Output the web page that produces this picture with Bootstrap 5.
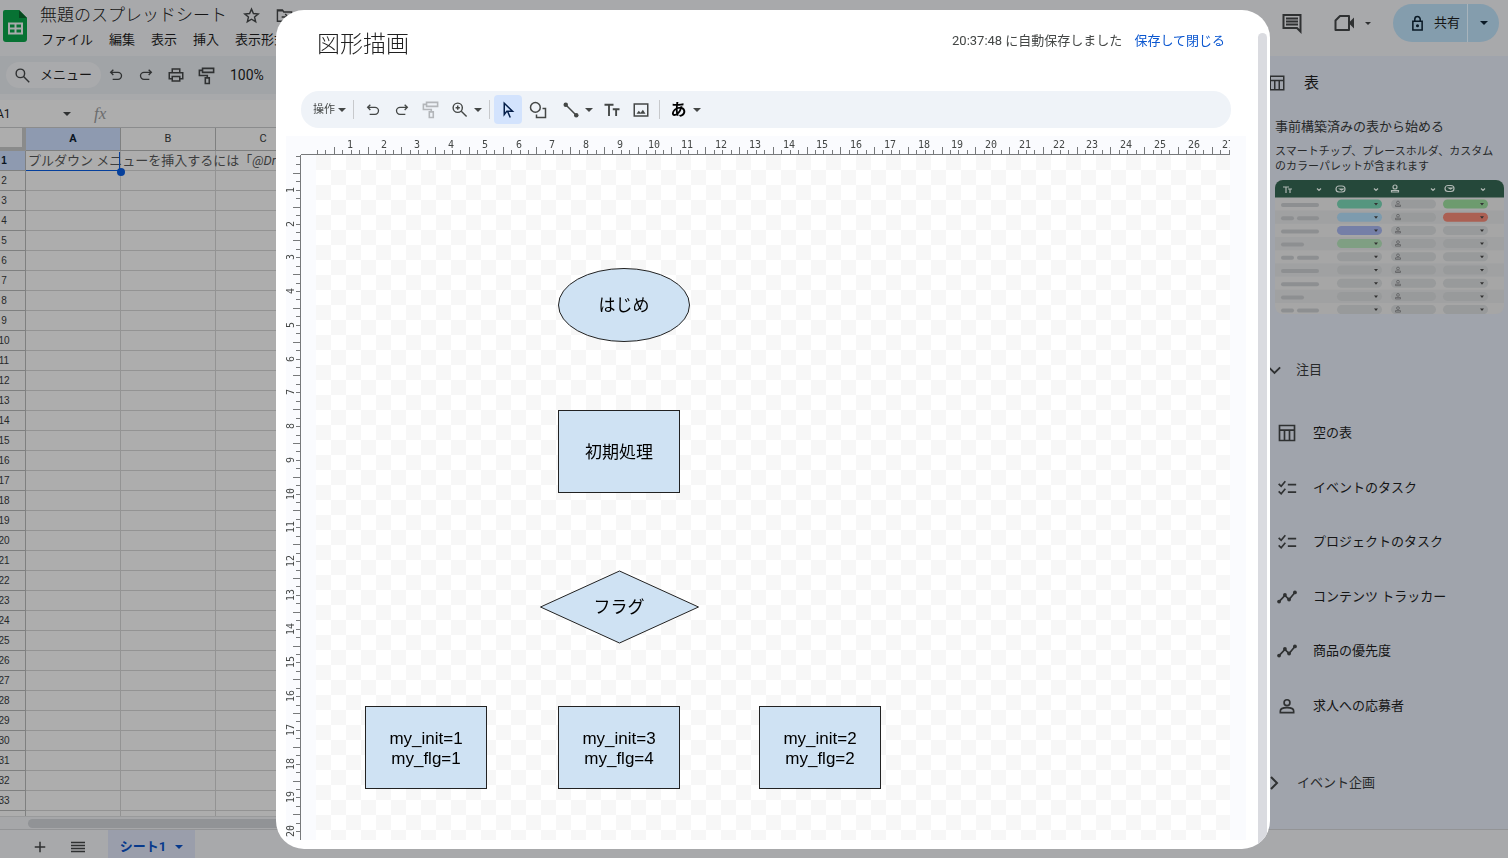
<!DOCTYPE html>
<html lang="ja">
<head>
<meta charset="utf-8">
<meta name="viewport" content="width=device-width, initial-scale=1">
<title>無題のスプレッドシート</title>
<link href="https://cdn.jsdelivr.net/npm/bootstrap@5.3.0/dist/css/bootstrap.min.css" rel="stylesheet">
<style>
:root{--page:#a8a9ab;--sheet:#adadad;--panel:#a0a4ac;--ink:#151515;--icon:#2f3132;--blue:#06409c}
body{font-family:Roboto,"Noto Sans CJK JP",sans-serif;font-size:13px;line-height:20px;color:var(--ink);background:var(--page)}
a,a:hover{color:inherit;text-decoration:none}
button{font:inherit;color:inherit;background:none;border:0;padding:0;display:inline-flex;align-items:center;justify-content:center}
svg{display:block;flex:none}
.ico{fill:none;stroke:currentColor;stroke-width:2}
.app .ico,.app .tri{color:var(--icon)}
.app .share .ico,.app .share .tri{color:#0a1a26}
.tri{width:0;height:0;border:4px solid transparent;border-top-color:currentColor;border-bottom:0;flex:none}
.tri-s{border-width:3px;border-bottom:0}
.app{height:100vh}
.topbar{flex:none;height:56px;padding:0 9px 0 2px}
.doc-title{padding-top:2px}
.doc-name{font-size:17px;line-height:26px;font-weight:300}
.doc-menus{margin-top:2px;margin-left:1px}
.sheet-side{margin-left:-20px;min-width:0}
.toolbar-main{flex:none;height:38px;background:#a1a4a7;border-radius:19px;margin-bottom:6px;padding-left:26px}
.find-pill{width:95px;height:26px;border-radius:13px;background:#a9aaac;gap:9px;padding-left:8px}
.tool{width:30px;height:30px}
.zoom-level{font-size:14px;margin-left:9px}
.call-group{gap:9px;margin:0 22px 0 28px}
.share{height:38px;background:#849dad;border-radius:19px;width:106px}
.share-main{width:75px;border-right:1px solid #a8b4bc;gap:9px;padding-left:10px}
.formula{flex:none;height:28px;background:var(--sheet);border-bottom:1px solid #8b8c8d}
.name-box{width:67px;margin-left:16px;border:0;background:none;padding:0;font-size:12px;color:var(--ink)}
.fx{font-family:"Liberation Serif",serif;font-style:italic;font-size:17px;color:#6b6c6e;margin-left:23px}
.grid-wrap{background:var(--sheet)}
.cells{table-layout:fixed;width:331px;border-collapse:separate;border-spacing:0;font-size:10px;line-height:19px}
.cells th,.cells td{height:20px;padding:0;border:0 solid #939393;border-width:0 1px 1px 0;white-space:nowrap}
.cells th{text-align:center;font-weight:400;color:#27292a;border-color:#7f8080}
.cells tbody th{padding-left:3px;font-family:"Liberation Sans",sans-serif}
.cells thead th{height:23px;font-size:11px;line-height:22px}
.cells thead th:first-child{border-right:4px solid #8a8b8b;border-bottom:4px solid #8a8b8b}
.cells th.on{background:#8e9ab0;color:#0a1522;font-weight:700}
.cells td.active{position:relative;border-bottom-color:var(--blue);font-size:13px;padding-left:2px;color:#3c3d3e}
.cells td.active::before{content:"";position:absolute;right:0;top:1px;width:1px;height:19px;background:var(--blue)}
.cells td.active::after{content:"";position:absolute;right:-5px;bottom:-6px;width:8px;height:8px;border-radius:4px;background:var(--blue)}
.scroll-row{flex:none;height:13px;padding:2px 0 2px 48px;border-top:1px solid #999a9b;background:#a6a7a9}
.scroll-thumb{background:#919396;border-radius:5px;height:9px}
.footer-tabs{flex:none;height:29px;border-top:1px solid #939496;padding-left:31px}
.footer-tabs button{padding-top:6px}
.all-sheets{margin:0 23px 0 22px}
.app .sheet-tab,.app .sheet-tab .tri{color:#07398b}
.sheet-tab{background:#9a9eab;width:87px;gap:9px;font-weight:700}
.side-panel{width:248px;background:var(--panel);padding-left:15px}
.panel-head{height:53px;margin-left:-7px;gap:18px;font-size:15px}
.panel-note{font-size:11px;line-height:15px;margin:7px 8px 6px 0}
.preview{width:229px}
.section-row{height:40px;color:#27292a;margin-left:-8px;gap:14px}
.first-section{margin-top:36px}
.next-section{margin-top:30px}
.template-list{height:327px}
.template-list a{gap:16px;padding-left:2px}
.dialog-box{position:fixed;inset:10px 238px 9px 276px;background:#fff;border-radius:28px;overflow:hidden;color:#444746}
.dialog-head{height:81px;padding:21px 45px 0 41px}
.dialog-head h1{font-size:23px;line-height:28px;margin:0;color:#1f1f1f;font-weight:300}
.save-link,.save-link:hover{color:#0b57d0}
.draw-tools{height:37px;margin:0 39px 8px 25px;border-radius:18px;background:#eff3f8;padding-left:12px}
.draw-tools .tool{height:29px;width:29px}
.draw-tools .tool.on{width:28px;margin:0 1px 0 4px;border-radius:4px;background:#d3e3fd;color:#041e49}
.ops{font-size:11px;gap:3px;margin-right:7px}
.zoom-menu{margin-right:7px}
.bar{width:1px;height:19px;background:#c7c9cc}
.stage{margin:0 24px 9px 10px;background:#fafbfe;display:grid;grid-template:19px minmax(0,1fr)/15px minmax(0,1fr) 16px}
.stage svg{width:100%;height:100%;overflow:hidden}
.stage text{text-anchor:middle}
.rule-x{grid-column:2;border-bottom:1px solid #77797b}
.rule-y{grid-column:1;grid-row:2;border-right:1px solid #77797b}
.rule-x text,.rule-y text{font:10px "DejaVu Sans Mono",monospace;fill:#444746}
.rule-x path,.rule-y path{stroke:#77797b;fill:none;shape-rendering:crispEdges}
.paper{grid-column:2;grid-row:2;margin-left:15px;background:repeating-conic-gradient(#fff 0 25%,#f7f7f7 0 50%) 0 0/30px 30px}
.paper text{font-family:"Liberation Sans","Noto Sans CJK JP",sans-serif;font-size:17px;fill:#000}
.node{fill:#cfe2f3;stroke:#222;stroke-width:1}
.dialog-scroll{position:absolute;right:3px;top:23px;bottom:0;width:9px;background:#dadbe0;border-radius:5px 5px 0 0}
</style>
</head>
<body>
<svg width="0" height="0" class="position-absolute" aria-hidden="true">
<symbol id="undo" viewBox="0 0 24 24"><path d="M8 4 4 8l4 4M4 8h11a5 5 0 0 1 0 10.500H7"/></symbol>
<symbol id="redo" viewBox="0 0 24 24"><path d="m16 4 4 4-4 4M20 8H9a5 5 0 0 0 0 10.500h8"/></symbol>
<symbol id="roller" viewBox="0 0 24 24"><path d="M7 3h14v5H7zM7 5.500H3V12h10v3M10.500 15h5v7h-5z"/></symbol>
<symbol id="grid-ico" viewBox="0 0 24 24"><path d="M3 3h18v18H3zM3 8.500h18M9 8.500V21M15 8.500V21"/></symbol>
<symbol id="checks" viewBox="0 0 24 24"><path d="m2 7 3 3 5-6M2 16l3 3 5-6M13 8h10M13 17h10"/></symbol>
<symbol id="trend" viewBox="0 0 24 24"><path d="m2.500 17.500 7-7.500 5 5 7-8.500"/><g fill="currentColor" stroke="none"><circle cx="2.500" cy="17.500" r="2.300"/><circle cx="9.500" cy="9.500" r="2.300"/><circle cx="14.500" cy="15" r="2.300"/><circle cx="21.500" cy="6.500" r="2.300"/></g></symbol>
<symbol id="person" viewBox="0 0 24 24"><circle cx="12" cy="8" r="3.500"/><path d="M4 20v-2c0-3 5-4 8-4s8 1 8 4v2z"/></symbol>
</svg>

<div class="app d-flex flex-column overflow-hidden">
<header class="topbar d-flex align-items-start">
  <svg width="26" height="34" viewBox="0 0 26 34" class="mt-2" aria-hidden="true"><path d="M3 2h14l8 8v21a3 3 0 0 1-3 3H4a3 3 0 0 1-3-3V4a2 2 0 0 1 2-2z" fill="#077233"/><path d="m17 2 8 8h-8z" fill="#06491f"/><path d="M7 15.500h13v10H7zM7 20.500h13M13.500 15v10" fill="none" stroke="#a9abac" stroke-width="2"/></svg>
  <div class="doc-title ms-2 ps-1">
    <div class="d-flex align-items-center"><span class="doc-name">無題のスプレッドシート</span>
      <button class="ms-3" aria-label="スター"><svg class="ico" width="17" height="17" viewBox="0 0 24 24"><path d="m12 3 2.700 6.200 6.800.6-5.200 4.400 1.600 6.600-5.900-3.500-5.900 3.500 1.600-6.600L2.500 9.800l6.800-.6z"/></svg></button>
      <button class="ms-3" aria-label="移動"><svg class="ico" width="17" height="17" viewBox="0 0 24 24"><path d="M2 4h7l2 3h11v13H2zM2 5.500h8M8 14h9M13 10l4 4-4 4"/></svg></button></div>
    <nav class="doc-menus d-flex gap-3"><a href="#">ファイル</a><a href="#">編集</a><a href="#">表示</a><a href="#">挿入</a><a href="#">表示形式</a></nav>
  </div>
  <div class="ms-auto d-flex align-items-center pt-1">
    <button aria-label="コメント"><svg class="ico" width="24" height="24" viewBox="0 0 24 24"><path d="M3.500 4h17v16.500L17 17H3.500zM6 7.500h12M6 10.500h12M6 13.500h12"/></svg></button>
    <button class="call-group" aria-label="通話"><svg class="ico" width="24" height="24" viewBox="0 0 24 24"><path d="M8 5h9v14H3.500V9.500z" stroke-linejoin="round"/><path d="m18 12 3-3v6z" fill="currentColor"/></svg><span class="tri tri-s"></span></button>
    <div class="share d-flex"><button class="share-main"><svg class="ico" width="15" height="17" viewBox="0 0 18 22"><path d="M3 8h12v11.500H3zM5.500 8V5.500a3.500 3.500 0 0 1 7 0V8"/><circle cx="9" cy="14" r="1"/></svg>共有</button><button class="flex-fill" aria-label="共有オプション"><span class="tri"></span></button></div>
  </div>
</header>

<div class="d-flex flex-fill overflow-hidden">
<main class="sheet-side flex-fill d-flex flex-column">
  <div class="toolbar-main d-flex align-items-center">
    <button class="find-pill justify-content-start"><svg class="ico" width="17" height="17" viewBox="0 0 24 24"><circle cx="9" cy="9" r="6"/><path d="m13.500 13.500 8 8"/></svg>メニュー</button>
    <button class="tool" aria-label="元に戻す"><svg class="ico" width="16" height="16"><use href="#undo"/></svg></button>
    <button class="tool" aria-label="やり直す"><svg class="ico" width="16" height="16"><use href="#redo"/></svg></button>
    <button class="tool" aria-label="印刷"><svg class="ico" width="18" height="18" viewBox="0 0 24 24"><path d="M7 8V4h10v4M7 17H3V9h18v8h-4M7 14h10v6H7z"/></svg></button>
    <button class="tool" aria-label="書式を貼り付け"><svg class="ico" width="19" height="19"><use href="#roller"/></svg></button>
    <button class="zoom-level">100%</button>
  </div>
  <div class="formula d-flex align-items-center">
    <input class="name-box" value="A1" aria-label="名前ボックス"><span class="tri"></span><span class="fx">fx</span>
  </div>
  <div class="grid-wrap flex-fill overflow-hidden">
    <table class="cells"><colgroup><col style="width:46px"><col style="width:95px"><col style="width:95px"><col style="width:95px"></colgroup>
    <thead><tr><th></th><th class="on">A</th><th>B</th><th>C</th></tr></thead><tbody id="rows"></tbody></table>
  </div>
  <div class="scroll-row"><div class="scroll-thumb"></div></div>
</main>

<aside class="side-panel">
  <div class="panel-head d-flex align-items-center"><svg class="ico" width="18" height="20"><use href="#grid-ico"/></svg><span>表</span></div>
  <div class="mt-2" style="color:#27292a"><span>事前構築済みの表から始める</span>
  <p class="panel-note">スマートチップ、プレースホルダ、カスタムのカラーパレットが含まれます</p></div>
  <svg class="preview" id="preview" height="134" viewBox="0 0 229 134" aria-hidden="true"></svg>
  <div class="section-row first-section d-flex align-items-center"><svg class="ico" width="15" height="15" viewBox="0 0 24 24"><path stroke-width="3" d="m3 7 9 9 9-9"/></svg><a href="#">注目</a></div>
  <div class="template-list d-flex flex-column mt-3">
    <a href="#" class="flex-fill d-flex align-items-center"><svg class="ico" width="20" height="20"><use href="#grid-ico"/></svg>空の表</a>
    <a href="#" class="flex-fill d-flex align-items-center"><svg class="ico" width="20" height="20"><use href="#checks"/></svg>イベントのタスク</a>
    <a href="#" class="flex-fill d-flex align-items-center"><svg class="ico" width="20" height="20"><use href="#checks"/></svg>プロジェクトのタスク</a>
    <a href="#" class="flex-fill d-flex align-items-center"><svg class="ico" width="20" height="20"><use href="#trend"/></svg>コンテンツ トラッカー</a>
    <a href="#" class="flex-fill d-flex align-items-center"><svg class="ico" width="20" height="20"><use href="#trend"/></svg>商品の優先度</a>
    <a href="#" class="flex-fill d-flex align-items-center"><svg class="ico" width="20" height="20"><use href="#person"/></svg>求人への応募者</a>
  </div>
  <div class="section-row next-section d-flex align-items-center"><svg class="ico" width="16" height="16" viewBox="0 0 24 24"><path stroke-width="3" d="m6 3 9 9-9 9"/></svg><a href="#">イベント企画</a></div>
</aside>
</div>

<footer class="footer-tabs d-flex">
  <button aria-label="シートを追加"><svg class="ico" width="18" height="18" viewBox="0 0 24 24"><path d="M12 5v14M5 12h14"/></svg></button>
  <button class="all-sheets" aria-label="すべてのシート"><svg class="ico" width="14" height="14" viewBox="0 0 14 14"><path stroke-width="1.500" d="M0 2.500h14M0 5.500h14M0 8.500h14M0 11.500h14"/></svg></button>
  <button class="sheet-tab">シート1<span class="tri"></span></button>
</footer>
</div>

<section class="dialog-box d-flex flex-column" role="dialog" aria-label="図形描画">
  <div class="dialog-head d-flex justify-content-between align-items-start"><h1>図形描画</h1>
    <div class="d-flex"><span>20:37:48 に自動保存しました</span><a href="#" class="save-link ms-2 ps-1">保存して閉じる</a></div></div>
  <div class="draw-tools d-flex align-items-center">
    <button class="ops">操作<span class="tri"></span></button><span class="bar me-1"></span>
    <button class="tool" aria-label="元に戻す"><svg class="ico" width="16" height="16"><use href="#undo"/></svg></button>
    <button class="tool" aria-label="やり直す"><svg class="ico" width="16" height="16"><use href="#redo"/></svg></button>
    <button class="tool text-black-50 opacity-50" aria-label="書式を貼り付け"><svg class="ico" width="19" height="19"><use href="#roller"/></svg></button>
    <button class="tool" aria-label="ズーム"><svg class="ico" width="17" height="17" viewBox="0 0 24 24"><circle cx="9.500" cy="9.500" r="6.500"/><path d="m14.500 14.500 7.500 7.500M9.500 6.500v6M6.500 9.500h6"/></svg></button>
    <button class="zoom-menu" aria-label="ズーム倍率"><span class="tri"></span></button><span class="bar"></span>
    <button class="tool on" aria-label="選択"><svg class="ico" width="18" height="18" viewBox="0 0 24 24"><path d="M7 3v15l3.500-4.500H18zM11.500 14l3.500 8"/></svg></button>
    <button class="tool" aria-label="図形"><svg class="ico" width="18" height="18" viewBox="0 0 24 24"><circle cx="8.500" cy="8.500" r="6.500"/><path d="M18 10h4v12H10v-4"/></svg></button>
    <button class="tool ms-1" aria-label="線"><svg class="ico" width="18" height="18" viewBox="0 0 24 24"><path d="m4 4 16 16"/><g fill="currentColor" stroke="none"><circle cx="5" cy="5" r="3"/><circle cx="19" cy="19" r="3"/></g></svg></button>
    <button aria-label="線の種類"><span class="tri"></span></button>
    <button class="tool ms-1" aria-label="テキスト"><svg class="ico" width="18" height="18" viewBox="0 0 24 24"><path stroke-width="2.500" d="M2 5h12M8 5v15M13 11h9M17.500 11v9"/></svg></button>
    <button class="tool" aria-label="画像"><svg class="ico" width="18" height="18" viewBox="0 0 24 24"><path d="M3 4h18v16H3z"/><path fill="currentColor" stroke="none" d="m6 17 3-4 2.500 2.500 3-4L18 17z"/></svg></button><span class="bar me-1 ms-1"></span>
    <button class="tool text-black fw-bold fs-6">あ</button><button aria-label="入力方法"><span class="tri"></span></button>
  </div>
  <div class="stage flex-fill">
    <div class="rule-x"><svg id="ruleX" aria-label="水平ルーラー"></svg></div>
    <div class="rule-y"><svg id="ruleY" aria-label="垂直ルーラー"></svg></div>
    <div class="paper"><svg>
      <ellipse class="node" cx="308" cy="150" rx="65.500" ry="36.500"/><text x="308" y="156">はじめ</text>
      <rect class="node" x="242.500" y="255.500" width="121" height="82"/><text x="303" y="303">初期処理</text>
      <path class="node" d="m224.500 452 79-36 79 36-79 36z"/><text x="303" y="458">フラグ</text>
      <rect class="node" x="49.500" y="551.500" width="121" height="82"/><text x="110" y="589">my_init=1</text><text x="110" y="609">my_flg=1</text>
      <rect class="node" x="242.500" y="551.500" width="121" height="82"/><text x="303" y="589">my_init=3</text><text x="303" y="609">my_flg=4</text>
      <rect class="node" x="443.500" y="551.500" width="121" height="82"/><text x="504" y="589">my_init=2</text><text x="504" y="609">my_flg=2</text>
    </svg></div>
  </div>
  <div class="dialog-scroll"></div>
</section>

<script src="https://cdn.jsdelivr.net/npm/bootstrap@5.3.0/dist/js/bootstrap.bundle.min.js"></script>
<script>
// Sheet rows
let rows = '';
for (let n = 1; n <= 33; n++) {
  rows += n === 1
    ? '<tr><th class="on">1</th><td class="active">プルダウン メニューを挿入するには「<i>@Dropdown</i></td><td></td><td></td></tr>'
    : `<tr><th>${n}</th><td></td><td></td><td></td></tr>`;
}
rows += '<tr><th></th><td></td><td></td><td></td></tr>';
document.getElementById('rows').innerHTML = rows;

// Rulers: four ticks per centimetre, the half-centimetre tick is the long one
const cm = 33.76;
let px = '', py = '', tx = '', ty = '';
for (let q = 0; q <= 108; q++) {
  const d = Math.round(q * cm / 4), len = q % 4 === 2 ? 7 : 4;
  px += `M${16.5 + d} 18v-${len}`;
  if (q < 82) py += `M14 ${1.5 + d}h-${len}`;
}
for (let n = 1; n <= 27; n++) {
  const d = Math.round(n * cm);
  tx += `<text x="${15 + d}" y="12">${n}</text>`;
  if (n < 21) ty += `<text transform="translate(8 ${d + 1}) rotate(-90)">${n}</text>`;
}
document.getElementById('ruleX').innerHTML = `<path d="${px}"/>${tx}`;
document.getElementById('ruleY').innerHTML = `<path d="${py}"/>${ty}`;

// Table template preview
const tints = [['#55967f', '#6d9b6e'], ['#7d9bae', '#ab6053'], ['#757fa7', '#989a9b'], ['#7f9f83', '#989a9b']];
let p = '<clipPath id="clip"><rect width="229" height="134" rx="8"/></clipPath><g clip-path="url(#clip)"><path fill="#a6a6a6" d="M0 0h229v134H0z"/>';
for (let r = 0; r < 9; r++) {
  const y = 24 + r * 13.2, t = tints[r] || ['#989a9b', '#989a9b'];
  if (r % 2) p += `<rect y="${y - 6.6}" width="229" height="13.200" fill="#a0a1a2"/>`;
  const bars = [[38], [13, 22], [38], [23], [13, 22], [38], [38], [23], [13, 22]][r];
  p += `<rect x="6" y="${y - 1}" width="${bars[0]}" height="4" rx="2" fill="#8d8f91"/>`;
  if (bars[1]) p += `<rect x="22" y="${y - 1}" width="22" height="4" rx="2" fill="#8d8f91"/>`;
  p += `<rect x="62" y="${y - 4.5}" width="45" height="9" rx="4.500" fill="${t[0]}"/><rect x="116" y="${y - 4.5}" width="45" height="9" rx="4.500" fill="#989a9b"/><rect x="168" y="${y - 4.5}" width="45" height="9" rx="4.500" fill="${t[1]}"/>`;
  p += `<path fill="#333" d="M99 ${y - 1}h4l-2 2.500zM205 ${y - 1}h4l-2 2.500z"/><g fill="none" stroke="#68696b"><circle cx="123" cy="${y - 1.5}" r="1.400"/><path d="M120.500 ${y + 2.5}v-1.500h5v1.500z"/></g>`;
}
p += '<path fill="#25483a" d="M0 0h229v17.500H0z"/><g fill="none" stroke="#b0b8b4" stroke-width="1.200"><path d="M8 7h6M11 7v6M13 9h4M15 9v4M42 8.500l2 2 2-2M99 8.500l2 2 2-2M156 8.500l2 2 2-2M206 8.500l2 2 2-2"/><rect x="61" y="6" width="9" height="6" rx="3"/><path d="M65 9h3l-1.500 1zM174 8h3l-1.500 1z"/><rect x="170" y="5.500" width="9" height="6" rx="3"/><circle cx="120" cy="7" r="2"/><path d="M116.500 12v-1.500h7V12z"/></g></g>';
document.getElementById('preview').innerHTML = p;
</script>
</body>
</html>
